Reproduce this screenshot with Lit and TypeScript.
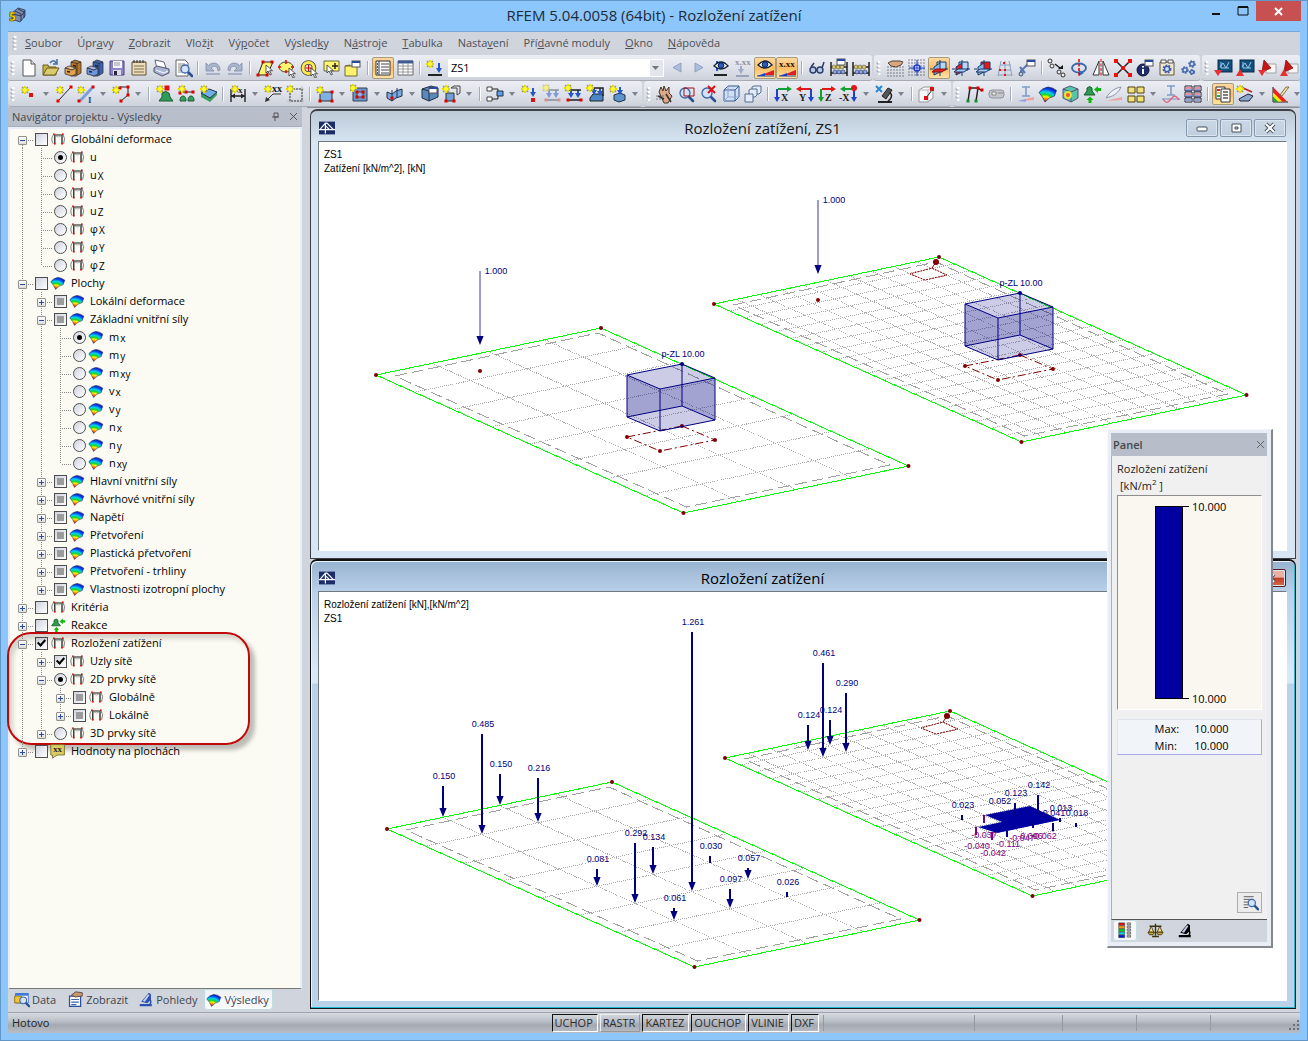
import { LitElement, html, svg, css, nothing } from "lit";
import { customElement, property, state } from "lit/decorators.js";
import { classMap } from "lit/directives/class-map.js";

/* ---------- icon building blocks (20 x 20 grid) ---------- */
const star = (x: number, y: number) => svg`
  <path d="M${x - 3} ${y - 3}l6 6M${x + 3} ${y - 3}l-6 6" stroke="#9a9a50" stroke-width="1.500"/>
  <path d="M${x} ${y - 4}v8M${x - 4} ${y}h8" stroke="#e8d800" stroke-width="2"/><circle cx=${x} cy=${y} r="2.200" fill="#fffb30"/>`;
const dot = (x: number, y: number, c = "#e00000", s = 3) =>
  svg`<rect x=${x - s / 2} y=${y - s / 2} width=${s} height=${s} fill=${c}/>`;
const dots = (pts: number[][], c = "#e00000", s = 3) => pts.map(([x, y]) => dot(x, y, c, s));
const line = (d: string, c = "#222", w = 1) => svg`<path d=${d} fill="none" stroke=${c} stroke-width=${w}/>`;
const cursor = (x: number, y: number) =>
  svg`<path d="M${x} ${y}v8l2-2 2 4 1.500-.7-2-3.600h3z" fill="#fff" stroke="#333" stroke-width=".8"/>`;
const lens = (x: number, y: number, r = 4) => svg`
  <path d="M${x + r - 1} ${y + r - 1}l4 4" stroke="#29508f" stroke-width="2.600" stroke-linecap="round"/>
  <circle cx=${x} cy=${y} r=${r} fill="#cfe2fb" fill-opacity=".85" stroke="#3c66a8" stroke-width="1.300"/>`;
const miniWin = (x: number, y: number) => svg`
  <rect x=${x} y=${y} width="8" height="6" fill="#fff" stroke="#555"/><path d="M${x} ${y + 1}h8" stroke="#2c4a9c" stroke-width="2"/>`;
const load = (x: number, y1: number, y2: number, c = "#2458c8") =>
  svg`<path d="M${x} ${y1}V${y2 - 3}" stroke=${c} stroke-width="2"/><path d="M${x - 3} ${y2 - 5}h6l-3 5z" fill=${c}/>`;
const wedge = svg`<path d="M10 15.500L19 12v5h-9z" fill="#e02020"/><path d="M2 18l8-3v3z" fill="#2040d0"/>${line("M2 18h17", "#2040a0")}`;
const glyph = (x: number, y: number, s: number, t: string, c = "#222") =>
  svg`<text x=${x} y=${y} font-size=${s} font-weight="700" font-family="Liberation Serif, serif" fill=${c}>${t}</text>`;
const gridDots = (x0: number, y0: number, nx: number, ny: number, c = "#222") => {
  const out = [];
  for (let i = 0; i < nx; i++) for (let j = 0; j < ny; j++) out.push(dot(x0 + i * 3, y0 + j * 3, c, 1));
  return out;
};
const gear = (x: number, y: number, r: number, c: string) => svg`
  <circle cx=${x} cy=${y} r=${r} fill="none" stroke=${c} stroke-width=${r} stroke-dasharray="1.500 1"/>
  <circle cx=${x} cy=${y} r=${r - 0.4} fill="#cfdcf2" stroke=${c} stroke-width="1.400"/>`;
const axes = (h: string, v: string, flip: boolean, t: string) => flip
  ? svg`${line("M4 5h12", h, 2)}<path d="M6 2v6l-5-3z" fill=${h}/>${line("M16 5v9", v, 2)}<path d="M13 13h6l-3 5z" fill=${v}/>${glyph(4, 17, 10, t)}`
  : svg`${line("M5 5h10", h, 2)}<path d="M14 2v6l5-3z" fill=${h}/>${line("M4 5v9", v, 2)}<path d="M1 13h6l-3 5z" fill=${v}/>${glyph(8, 17, 10, t)}`;
const planes = (n: number) => svg`
  <path d="M8 4h9v8H8z" fill=${n === 2 ? "#e81818" : "#b9d7f5"} stroke="#16396f"/>
  <path d="M5 9l6-4v9l-6 3z" fill=${n === 1 ? "#e02020" : "#8bb9e8"} stroke="#16396f"/>
  <path d="M3 14l4-3h10l-4 3z" fill=${n === 0 ? "#e02020" : "#a9cdf2"} stroke=${n === 0 ? "#901010" : "#16396f"}/>
  <path d="M11 2v3M11 14v4M1 11h3M16 11h3" stroke="#16396f"/>`;
const cabinet = (a: string, b: string, c: string) => svg`
  <path d="M8 4l4-2 6 2v11l-5 3H8z" fill=${b} stroke="#333" stroke-width=".8"/><path d="M8 4l6 1.500 4-1.500M14 5v12" stroke="#333" stroke-width=".8"/>
  <path d="M2 10l4-2 7 2-4 2z" fill=${c} stroke="#333" stroke-width=".8"/><path d="M2 10l7 2 4-2v6l-4 2-7-2z" fill=${a} stroke="#333" stroke-width=".8"/>
  <path d="M4 13.500l3 .6M10 7.500l3 .7" stroke="#222" stroke-width="1.500"/>`;
const rainbow = svg`
  <radialGradient id="bands" gradientUnits="userSpaceOnUse" cx="7" cy="20" r="17">
    <stop offset="0.150" stop-color="#e81000"/><stop offset="0.300" stop-color="#ff8000"/><stop offset="0.430" stop-color="#ffee00"/>
    <stop offset="0.560" stop-color="#18d828"/><stop offset="0.720" stop-color="#00d0f0"/><stop offset="0.860" stop-color="#0a50f0"/><stop offset="1" stop-color="#0818c0"/>
  </radialGradient>
  <path d="M1 8.500Q4 4 10 3q5 .5 8.500 3.500-1 2-2 5.500Q11 13 7 18 5 13 1 8.500z" fill="url(#bands)" stroke="#1c2a50" stroke-width=".7"/>`;
const abacus = svg`${line("M2 4v14M18 4v14M2 9h16M2 15h16", "#222", 1.5)}${[5, 9, 13].map(x => svg`<circle cx=${x} cy="9" r="2" fill="#d8c860" stroke="#555" stroke-width=".6"/><circle cx=${x + 1} cy="14" r="2" fill="#86a6e6" stroke="#335" stroke-width=".6"/>`)}`;
const eye = (y: number) => svg`<path d="M3 ${y}q7-8 14 0q-7 6-14 0z" fill="#fff" stroke="#123" stroke-width="1.300"/><circle cx="10" cy=${y - 0.5} r="2.800" fill="#2a5fc0" stroke="#001a50"/>`;
const arc = (flip: boolean) => svg`<g transform=${flip ? "translate(20 0) scale(-1 1)" : ""}>
  <path d="M3 13V5l2.500 2.500C10 3 17 5 17 12l-2 1c0-5-4-6-7-3l3 3z" fill="#a9b4cd" stroke="#7f8cab" stroke-width=".8"/><path d="M3 16h14" stroke="#9aa6bf" stroke-width="1.600"/></g>`;
const slab = svg`<path d="M2 5l9-3 7 2v9l-9 4-7-3z" fill="#5a88bd" stroke="#234"/><path d="M2 5l7 2 9-3M9 7v10" fill="none" stroke="#234"/>`;
const scene = svg`<rect x="5" y="2" width="14" height="12" fill="#12507c" stroke="#0a2c4a"/>${line("M7 9l3-4 3 5 3-6M8 4v6h8", "#9cc8ee")}`;
const leaf = svg`<path d="M9 6h10v9H9z" fill="#f6f6f6" stroke="#a4a4a4"/><path d="M7 2l7 8-9 4z" fill="#c81414" stroke="#801010" stroke-width=".8"/>`;

const icons: Record<string, unknown> = {
  new: svg`<path d="M4 2h8l4 4v12H4z" fill="#fff" stroke="#555"/><path d="M12 2v4h4" fill="#dde4f0" stroke="#555"/>`,
  open: svg`<path d="M2 7h5l1 2h7v8H2z" fill="#c9b44a" stroke="#6b5c16"/><path d="M2 17l4-7h12l-4 7z" fill="#dccb6c" stroke="#6b5c16"/><path d="M9 5c2-3 5-3 6 0M16 1v5h-4" fill="none" stroke="#3c6ea8" stroke-width="1.500"/>`,
  boxOrange: cabinet("#e3a24e", "#b87526", "#f0c489"),
  boxBlue: cabinet("#6f95e0", "#3c62b8", "#a9c2f2"),
  save: svg`<path d="M3 3h14v14H3z" fill="#8d85c4" stroke="#4a437e"/><path d="M6 3h9v7H6z" fill="#f4f4fb"/><path d="M7 5h6M7 7h6" stroke="#99a"/><path d="M6 12h8v5H6z" fill="#dcdcec"/><path d="M7 13h3v4H7z" fill="#26263c"/>`,
  note: svg`<path d="M3 4h14v13H3z" fill="#efdcb8" stroke="#5e5138"/><path d="M3 4h14M5 8h10M5 11h10M5 14h10" stroke="#7b6c4e"/><path d="M5 2v3M8 2v3M11 2v3M14 2v3" stroke="#333"/>`,
  print: svg`<path d="M4 2l9 2 2 6-9 1z" fill="#fff" stroke="#667"/><path d="M3 10l3-2 12 3v4l-7 3-8-4z" fill="#aab4d6" stroke="#556"/><path d="M5 12l8 3 4-2" stroke="#fff" fill="none"/>`,
  preview: svg`<path d="M3 2h9l3 3v13H3z" fill="#fff" stroke="#666"/>${line("M5 6h7M5 8h7M5 10h5M5 12h5M5 14h5", "#888")}${lens(12, 11, 4)}`,
  undo: arc(false), redo: arc(true),
  selPara: svg`<path d="M3 17L8 4h10l-6 13z" fill="#fff46e" stroke="#222"/>${dots([[3, 17], [8, 4], [17, 4], [12, 17]])}${cursor(11, 7)}`,
  selEll: svg`<ellipse cx="9" cy="9" rx="7" ry="5" fill="#fff46e" stroke="#444"/>${line("M9 2v4M9 12v3M1 9h3M14 9h3", "#e00000", 1.5)}${cursor(12, 10)}`,
  selRing: svg`<circle cx="9.500" cy="10" r="5.500" fill="none" stroke="#444" stroke-width="4.600"/><circle cx="9.500" cy="10" r="5.500" fill="none" stroke="#ffe94a" stroke-width="3"/>${line("M9.500 7v6M6.500 10h6", "#e00000")}${cursor(12, 10)}`,
  selPlus: svg`<path d="M3 3h15v10H3z" fill="#fff46e" stroke="#6a6a40"/>${line("M11 8h6M14 5v6", "#222", 1.500)}${cursor(6, 7)}`,
  selWin: svg`<path d="M2 8h12v10H2z" fill="#fff26a" stroke="#6a6a40"/><path d="M2 8l5-1v1" stroke="#6a6a40"/>${miniWin(9, 3)}`,
  navigator: svg`<path d="M3 3h14v14H3z" fill="#fff" stroke="#333"/><path d="M6 3v14" stroke="#333"/>${line("M8 6h8M8 9h8M8 12h8M8 15h8", "#445")}${line("M4 6h1M4 9h1M4 12h1M4 15h1", "#222", 1.5)}`,
  table: svg`<path d="M3 3h15v14H3z" fill="#fff" stroke="#666"/><path d="M3 4h15" stroke="#3e5c92" stroke-width="3"/>${line("M3 8h15M3 11h15M3 14h15M8 5v12M13 5v12", "#999")}`,
  newLoad: svg`${star(5, 6)}${load(14, 5, 15)}${line("M3 17h14", "#222", 2)}`,
  prev: svg`<path d="M14 5v9l-8-4.500z" fill="#aebede" stroke="#8796bb" stroke-width=".8"/>`,
  next: svg`<path d="M6 5v9l8-4.500z" fill="#aebede" stroke="#8796bb" stroke-width=".8"/>`,
  eyeLoad: svg`${line("M6 3v10", "#2458c8", 2)}${eye(8)}${line("M3 17h13", "#222", 2)}`,
  valLoad: svg`${glyph(2, 7, 9, "x.xx", "#8f94a6")}${load(8, 8, 16, "#a0aac4")}${line("M3 18h13", "#9aa2b8", 2)}`,
  eyeRes: svg`${wedge}${eye(7)}`,
  valRes: svg`${wedge}${glyph(2, 9, 9, "x.xx", "#201400")}`,
  glasses: svg`<g fill="#b7c8ea" stroke="#2b3c66" stroke-width="1.400"><circle cx="6" cy="12" r="3"/><circle cx="13" cy="12" r="3"/></g>${line("M4 9l3-4M15 10l2-6M9 12h1", "#2b3c66", 1.500)}`,
  abacusWin: svg`${abacus}${miniWin(8, 1)}`, abacus,
  gridHand: svg`${gridDots(3, 9, 6, 4)}<path d="M3 5l4-2h8l3 1-2 3-5 2-5-1z" fill="#d9a67e" stroke="#543"/>`,
  gridSnap: svg`${gridDots(2, 2, 6, 6)}<circle cx="10" cy="10" r="3" fill="#fff" stroke="#1838c8" stroke-width="1.500"/>${line("M10 2v16M2 10h16", "#1838c8")}`,
  plane0: planes(0), plane1: planes(1), plane2: planes(2),
  guides: svg`${line("M6 3L3 18M10 3v15M14 3l3 15M5 7h11M4 12h12M3 17h14", "#8aa0c0")}${dots([[9, 5], [5, 12], [10, 12], [10, 17]], "#e01818", 2)}`,
  props: svg`${line("M4 17L4 13 12 5M3 9l5 6", "#5a78b0", 2)}<circle cx="4" cy="16" r="2" fill="#b8c8e8" stroke="#456"/>${miniWin(10, 2)}`,
  copy: svg`${line("M8 6l5 4", "#111", 1.300)}<path d="M11 11h5V7z" fill="#111"/><g fill="#eee" stroke="#333"><circle cx="3" cy="3" r="2"/><circle cx="5" cy="8" r="2"/><circle cx="12" cy="14" r="2"/><circle cx="16" cy="17" r="2"/></g>`,
  rotate: svg`<ellipse cx="10" cy="10" rx="7" ry="4.500" fill="none" stroke="#3468b0" stroke-width="1.800"/><path d="M10 12l5 3-5 3z" fill="#3468b0"/><path d="M10 1v18" stroke="#e00000" stroke-width="1.500" stroke-dasharray="3 1.500"/>`,
  mirror: svg`<path d="M8 3v14H2zM12 3v14h6z" fill="#fff" stroke="#333"/><path d="M10 1v18" stroke="#e00000" stroke-dasharray="3 1.500"/>`,
  cross: svg`${line("M3 3l14 14M17 3L3 17", "#222", 1.500)}${dots([[3, 3], [17, 3], [3, 17], [17, 17], [10, 10]], "#e81010", 4)}`,
  info: svg`<circle cx="8" cy="12" r="6" fill="#1e2c6c" stroke="#0a1238"/><path d="M8 8v1.500M8 11v5" stroke="#fff" stroke-width="2"/>${miniWin(10, 2)}`,
  gearWin: svg`<path d="M3 4h14v13H3z" fill="#f3e7cd" stroke="#5b5443"/><path d="M4 2h5v3H4zM11 2h5v3h-5z" fill="#fff" stroke="#555"/>${gear(10, 11, 3, "#3b5fa8")}`,
  gears: svg`${gear(6, 12, 2.5, "#4467a8")}${gear(13, 6, 2.5, "#4467a8")}${gear(13, 14, 2, "#4467a8")}`,
  sceneDown: svg`${scene}<path d="M1 12h8l-4 6z" fill="#e83030"/>`,
  sceneUp: svg`${scene}<path d="M1 18h8l-4-7z" fill="#e83030"/>`,
  leafDown: svg`${leaf}<path d="M1 12h8l-4 6z" fill="#e83030"/>`,
  leafUp: svg`${leaf}<path d="M1 18h8l-4-7z" fill="#e83030"/>`,

  node: svg`${star(6, 6)}${dot(12, 11, "#e01010", 4)}`,
  bar: svg`${line("M5 16L16 4", "#222")}${dots([[4, 17], [17, 3]])}${star(6, 6)}`,
  beam: svg`${line("M4 17L16 4", "#7da0d8", 3)}${star(5, 6)}${dots([[3, 17], [17, 3]])}${glyph(12, 19, 9, "I", "#23468c")}`,
  poly: svg`${line("M4 6h3l2-3h8v8l-7 6", "#222")}${dots([[9, 4], [17, 3], [17, 11], [10, 17], [4, 6]])}${star(5, 6)}`,
  support: svg`<path d="M8 9q4-3 7 0l1 4 3 4H5l3-4z" fill="#2f9c58" stroke="#1c5c30"/>${dot(13, 4, "#e01010", 5)}${star(6, 5)}`,
  lineSup: svg`${line("M4 8h13", "#222")}${dots([[4, 9], [17, 8], [10, 8]])}<path d="M4 17q0-5 3-5t3 5zM12 17q0-5 3-5t3 5z" fill="#38a05c" stroke="#1c5c30"/>${star(6, 5)}`,
  surfSup: svg`<path d="M3 13l9 5 7-7v-3l-7 5-9-4z" fill="#38a05c"/><path d="M3 9l8-4 8 3-7 6z" fill="#6fb0ea" stroke="#234"/>${star(6, 5)}`,
  dim: svg`${line("M3 5v13M17 5v13M3 12h14", "#222", 1.400)}<path d="M3 12l4-2.500v5zM17 12l-4-2.500v5z" fill="#222"/>${star(7, 5)}${glyph(10, 9, 9, "x")}`,
  note2: svg`${star(5, 5)}${glyph(9, 8, 10, "xx")}${line("M18 10H10l-7 7", "#333")}<path d="M2 18l1-5 4 3z" fill="#333"/>`,
  frameGrid: svg`<path d="M5 5h12v12H5z" fill="none" stroke="#222" stroke-dasharray="2 1"/>${line("M5 2v17M17 2v17M2 5h17M2 17h17", "#999", 0.5)}${star(5, 5)}`,
  surface: svg`<path d="M5 8h12v9H5z" fill="#7fb2e4" stroke="#333"/>${dots([[5, 17], [17, 17], [17, 8]])}${star(5, 6)}`,
  opening: svg`<path d="M3 4h14v13H3z" fill="#6a97cc" stroke="#345"/><path d="M7 8h6v5H7z" fill="#8fb4e0" stroke="#345"/>${dots([[7, 8], [13, 8], [7, 13], [13, 13]])}${star(3, 4)}`,
  fold: svg`<path d="M2 8l5 2 4-3 6-2v7l-6 2-4 3-5-3z" fill="#79a9dc" stroke="#234"/>${line("M7 6v11M12 4v10", "#1c3566")}${dot(7, 14)}`,
  solid: svg`${slab}${miniWin(9, 3)}`,
  solids: svg`<path d="M4 9h8v8H4z" fill="#6f9fd4" stroke="#333"/><path d="M9 4l3-2h6v7l-3 2" fill="none" stroke="#444"/><path d="M9 4h6v7" fill="none" stroke="#444"/>${dots([[4, 17], [12, 17]])}${star(4, 5)}`,
  release: svg`<path d="M2 3h5v4H2zM2 13h5v4H2z" fill="#fff" stroke="#444"/>${line("M7 5h6v3M7 15h6v-3", "#222")}<path d="M12 7h6v5h-6z" fill="#5f9ee6" stroke="#234"/>`,
  nodalLoad: svg`${star(5, 5)}${load(13, 4, 13)}${dot(13, 16, "#e01010", 4)}`,
  barLoad: svg`<g opacity=".5">${load(7, 6, 14)}${load(14, 6, 14)}${line("M4 6h13M4 16h13", "#345", 1.500)}${star(4, 4)}</g>${dots([[4, 16], [17, 16]], "#d89090")}`,
  lineLoad: svg`${load(7, 6, 14)}${load(14, 6, 14)}${line("M4 6h13M4 16h13", "#222", 1.500)}${star(4, 4)}${dots([[4, 16], [17, 16]])}`,
  surfLoad: svg`<path d="M4 14l3-4h10v7H4z" fill="#4a86c8" stroke="#222"/>${load(8, 4, 11)}${load(14, 4, 12)}${line("M5 4h12v8", "#222", 1.500)}${star(4, 4)}`,
  solidLoad: svg`<path d="M6 11l6-2 5 2v5l-6 2-5-2z" fill="#5e94cc" stroke="#234"/>${load(12, 3, 11)}${star(5, 5)}`,
  hand: svg`<path d="M4 8l2-5 2 4 1-5 2 5 3-4v6l3 3-4 7H9z" fill="#dba98a" stroke="#432"/><path d="M11 10l5 8M3 12l6 3" stroke="#333" stroke-width="1.600"/>${gridDots(2, 12, 3, 2)}`,
  zoomWin: svg`${lens(8, 9, 5)}<path d="M7 4h10v8H7z" fill="none" stroke="#a01010"/>`,
  zoomX: svg`${lens(8, 9, 5)}${line("M9 2l7 7M16 2L9 9", "#e01010", 2)}`,
  cube: svg`<path d="M3 6l4-4h11v11l-4 4H3z" fill="#cfdff4" stroke="#3b5d94"/><path d="M3 6h11v11M14 6l4-4" fill="none" stroke="#3b5d94"/><path d="M7 2v11h11M7 13l-4 4" fill="none" stroke="#8fa8cf"/>`,
  cubes: svg`<g fill="#e4ecf8" stroke="#556a90"><path d="M9 3l2-1h7v6l-2 2H9z"/><path d="M6 6l2-1h6v6l-2 2H6z"/><path d="M2 10h8v8H2z"/></g>`,
  axX: axes("#12a030", "#2040d0", false, "X"), axY: axes("#e01818", "#2040d0", true, "Y"),
  axZ: axes("#e01818", "#12a030", false, "Z"),
  axMX: svg`${line("M3 5h12", "#12a030", 2)}<path d="M6 2v6L1 5z" fill="#12a030"/>${line("M15 5v9", "#2040d0", 2)}<path d="M12 13h6l-3 5z" fill="#2040d0"/><circle cx="15" cy="4" r="3" fill="#e01818"/>${glyph(0, 17, 10, "-X")}`,
  microX: svg`<path d="M4 17h14v2H4z" fill="#222"/><path d="M8 12l6-8 4 2-6 9z" fill="#555" stroke="#222"/><path d="M16 8c3 4 1 7-2 9" fill="none" stroke="#222" stroke-width="1.500"/>${line("M2 2l6 6M8 2L2 8", "#2a86d8", 2)}`,
  clip: svg`<path d="M2 6l5-3h9v11l-5 4H2z" fill="#f4f6fa" stroke="#999"/>${line("M2 6h9v12M11 6l5-3", "#b8b8b8")}${line("M9 14l6-8", "#222")}${dots([[9, 14], [15, 5]], "#d81010", 4)}`,
  frame: svg`${line("M4 17L6 4h8l4 3M14 4l-2 13", "#222", 1.500)}${dots([[6, 4], [14, 4], [18, 6]])}${dots([[4, 17], [12, 17]], "#109030")}`,
  pill: svg`<rect x="3" y="6" width="15" height="8" rx="3" fill="#c3c6cf" stroke="#90949f"/><path d="M6 8h4v3H6z" fill="#eee" stroke="#888"/><path d="M12 9h5" stroke="#888"/>`,
  beamRes: svg`${line("M6 3h8M10 3v9M6 12h8", "#7f9cc8", 1.600)}<path d="M2 17L18 13v3z" fill="#f0a0a0"/><path d="M2 17l8-2v3z" fill="#8fa4e8"/>`,
  surfRes: rainbow,
  solidRes: svg`<path d="M3 5l7-3 8 3v9l-7 4-8-4z" fill="#58c4a8" stroke="#557"/><path d="M3 5l8 3v10M11 8l7-3" fill="none" stroke="#557"/><ellipse cx="8" cy="11" rx="4" ry="4" fill="#e8e040"/><circle cx="8" cy="11" r="2" fill="#f05a20"/>`,
  reactions: svg`<path d="M5 4q3-3 5 0v3l3 4H2l3-4z" fill="#2f9a50" stroke="#175c2c"/><path d="M6.500 19h3v-3h2L8 12.500 4.500 16h2z" fill="#0cb80c"/><path d="M19 4h-3V2l-4 3.500L16 9V7h3z" fill="#0cb80c"/>`,
  section: svg`<path d="M2 14c5-8 10-10 15-11-2 5-7 9-12 10z" fill="#eef2f8" stroke="#8a94a8"/><path d="M2 17L18 13v3z" fill="#f0a0a0"/>`,
  folders: svg`<g fill="#f2e27c" stroke="#4c4010"><path d="M2 3h7v6H2zM11 3h7v6h-7zM2 12h7v6H2zM11 12h7v6h-7z"/></g>`,
  diagram: svg`${line("M6 2h8M10 2v9M6 11h8", "#7f9cc8", 1.600)}${line("M1 15h18", "#8090c0")}${line("M2 15c3 5 5 4 8 0s5-4 8 1", "#e06080", 1.300)}`,
  tables: svg`<g fill="#fff" stroke="#223"><path d="M2 2h7v5H2zM11 2h7v5h-7zM2 8h7v5H2zM11 8h7v5h-7zM2 14h7v4H2zM11 14h7v4h-7z"/></g>${line("M3 4h5M12 4h5M3 10h5M12 10h5", "#d02040")}${line("M3 6h5M12 6h5M3 12h5M12 12h5M3 16h5M12 16h5", "#2040c0")}`,
  panel: svg`<path d="M3 3h9v12H3z" fill="#fff" stroke="#333"/><path d="M8 5h9v13H8z" fill="#fff" stroke="#333"/>${line("M10 8h5M10 11h5M10 14h5", "#555", 1.500)}<path d="M4 5h3v2H4z" fill="#e02020"/><path d="M4 8h3v2H4z" fill="#f0d020"/><path d="M4 11h3v2H4z" fill="#20b040"/>`,
  newView: svg`<path d="M4 15l9-5 5 2-4 5H5z" fill="#8ca8cc" stroke="#223"/>${line("M8 4l9 4", "#c02020", 1.500)}${star(5, 5)}`,
  render: svg`<path d="M3 3v15h15" stroke="#222"/><path d="M3 3l14 14.500h-5L3 8.500z" fill="#f02020"/><path d="M3 8.500l9 9H8l-5-5z" fill="#ffe600"/><path d="M3 12.500l5 5H3z" fill="#10b020"/><path d="M19 3l-7 9-2-1 6-8z" fill="#f4e4a0" stroke="#653" stroke-width=".8"/>`,

  frameTree: svg`${line("M6 16V5h9v11", "#111", 1.500)}${line("M4 16Q0 9 5 4M17 16q3-7-1-12", "#777", 1.200)}${line("M6 6q4.500 3 9 0", "#999")}${dots([[5, 4], [16, 4], [6, 16], [15, 16]], "#e01010", 2)}`,
  xx: svg`<path d="M1 2h17v13H9l-6 4v-4H1z" fill="#d8cc62" stroke="#6b6220"/>${glyph(4, 11, 11, "xx")}`,
  tabData: svg`<path d="M3 3h15v11H3z" fill="#fff" stroke="#36c"/><path d="M2 6h8v8H2z" fill="#f4c534" stroke="#8a6a10"/><path d="M3 4h15" stroke="#3c78d8" stroke-width="3"/>${lens(12, 11, 4)}`,
  tabShow: svg`<path d="M3 6h13v12H3z" fill="#fff" stroke="#2c50a0" stroke-width="1.500"/>${line("M5 10h9M5 13h9M5 16h6", "#3c68b8", 1.400)}<path d="M5 5l5-4 8 1v4l-8 1z" fill="#c99672" stroke="#543"/>`,
  micro: svg`<path d="M1 16h16v3H1z" fill="currentColor"/><path d="M3 13L13 1l3 2v7l-5 5z" fill="currentColor"/><path d="M5 12l7-9 2 1-6 9z" fill="#c4cfe8"/><path d="M14 9c3 4 2 6 0 8" stroke="currentColor" stroke-width="2"/>`,
  legend: svg`${["#e81010", "#ffa000", "#00d820", "#00d8f0", "#0010e8"].map((c, i) => svg`<path d="M2 ${1 + i * 3.6}h7v3H2z" fill=${c} stroke="#333" stroke-width=".6"/><path d="M12 ${1 + i * 3.6}h4v2.400h-4z" fill="#bbb" stroke="#555" stroke-width=".8"/>`)}`,
  scales: svg`${line("M10 2v14M3 5h14M6 17h8", "#3d3210", 1.600)}<path d="M2 12l3-7 3 7zM12 12l3-7 3 7z" fill="#f4e080" stroke="#3d3210"/><path d="M1 12h8l-2 3H3zM11 12h8l-2 3h-4z" fill="#c8a830" stroke="#3d3210"/>`,
  find: svg`${line("M3 3h11M3 6h11M3 9h6M3 12h5M3 15h5", "#555")}${lens(12, 10, 4)}`,
  bridge: svg`<path d="M0 2h20v16H0z" fill="#1c2c68"/>${line("M0 12h20M8 3v14M8 4L1 12M8 4h2l8 8M9 8l4 4", "#fff", 1.500)}`,
};

const icon = (name: string, size = 20) =>
  html`<svg width=${size} height=${size} viewBox="0 0 20 20" fill="none" aria-hidden="true">${icons[name]}</svg>`;

/* "|" is a divider, a leading "*" marks a pressed button, a trailing ":v" adds the menu arrow */
const bars: string[][][] = [
  [
    "new open boxOrange boxBlue save note print preview | undo redo | selPara selEll selRing selPlus selWin | *navigator table | newLoad combo prev next eyeLoad valLoad *eyeRes *valRes | glasses abacusWin abacus",
    "gridHand gridSnap *plane0 plane1 plane2 guides props | copy rotate mirror cross info gearWin gears",
    "sceneDown sceneUp leafDown leafUp",
  ].map(s => s.split(" ")),
  [
    "node:v bar beam:v poly:v | support lineSup surfSup | dim:v note2 frameGrid | surface:v opening:v fold:v solid solids:v | release:v nodalLoad barLoad lineLoad surfLoad solidLoad:v",
    "hand zoomWin zoomX cube cubes | axX axY axZ axMX:v microX:v | clip:v",
    "frame pill | beamRes surfRes solidRes reactions section folders:v diagram tables | *panel newView:v render:v",
  ].map(s => s.split(" ")),
];

const menus = ["_Soubor", "Úpr_avy", "_Zobrazit", "Vlož_it", "Vý_počet", "Výsled_ky", "N_ástroje", "_Tabulka", "Nasta_vení", "Pří_davné moduly", "_Okno", "_Nápověda"];

/* ---------- navigator tree ---------- */
interface TreeNode {
  t: string; sub?: string; icon?: string;
  kind?: "check" | "radio"; on?: boolean; mixed?: boolean;
  open?: boolean; kids?: TreeNode[]; leaf?: boolean; group?: string; marked?: boolean;
}
const radios = (group: string, ic: string, list: string[][]): TreeNode[] =>
  list.map(([t, sub], i) => ({ t, sub, icon: ic, kind: "radio", on: i === 0, leaf: true, group }));
const mixed = (t: string, ic = "surfRes"): TreeNode => ({ t, icon: ic, mixed: true });

const tree: TreeNode[] = [
  { t: "Globální deformace", icon: "frameTree", open: true, kids: radios("def", "frameTree", [["u"], ["u", "X"], ["u", "Y"], ["u", "Z"], ["φ", "X"], ["φ", "Y"], ["φ", "Z"]]) },
  {
    t: "Plochy", icon: "surfRes", open: true, kids: [
      mixed("Lokální deformace"),
      { ...mixed("Základní vnitřní síly"), open: true, kids: radios("force", "surfRes", [["m", "x"], ["m", "y"], ["m", "xy"], ["v", "x"], ["v", "y"], ["n", "x"], ["n", "y"], ["n", "xy"]]) },
      mixed("Hlavní vnitřní síly"), mixed("Návrhové vnitřní síly"), mixed("Napětí"), mixed("Přetvoření"),
      mixed("Plastická přetvoření"), mixed("Přetvoření - trhliny"), mixed("Vlastnosti izotropní plochy"),
    ],
  },
  { t: "Kritéria", icon: "frameTree" },
  { t: "Reakce", icon: "reactions" },
  {
    t: "Rozložení zatížení", icon: "frameTree", on: true, open: true, marked: true, kids: [
      { t: "Uzly sítě", icon: "frameTree", on: true },
      { t: "2D prvky sítě", icon: "frameTree", kind: "radio", group: "mesh", on: true, open: true, kids: [mixed("Globálně", "frameTree"), mixed("Lokálně", "frameTree")] },
      { t: "3D prvky sítě", icon: "frameTree", kind: "radio", group: "mesh" },
    ],
  },
  { t: "Hodnoty na plochách", icon: "xx" },
];

@customElement("nav-tree")
class NavTree extends LitElement {
  @state() private version = 0;

  static styles = css`
    :host { display: block; }
    .group { position: relative; }
    .row { display: flex; align-items: center; height: 18px; }
    .guide, .cell { flex: none; align-self: stretch; position: relative; width: 19px; }
    .cell { width: 22px; }
    .v::before, .h::after { content: ""; position: absolute; }
    .v::before { left: 9px; top: 0; bottom: 0; width: 1px; background: repeating-linear-gradient(#8a8a8a 0 1px, transparent 1px 2px); }
    .first::before { top: 9px; }
    .last::before { bottom: 8px; }
    .h::after { left: 11px; right: 2px; top: 10px; height: 1px; background: repeating-linear-gradient(90deg, #8a8a8a 0 1px, transparent 1px 2px); }
    .twist { position: absolute; z-index: 1; left: 5px; top: 6px; width: 9px; height: 9px; padding: 0; border: 1px solid #919191; border-radius: 1px; background: linear-gradient(#fff, #dcdcdc); }
    .twist::before, .twist.plus::after { content: ""; position: absolute; left: 1px; top: 3px; width: 5px; height: 1px; background: #2a4d9a; }
    .twist.plus::after { left: 3px; top: 1px; width: 1px; height: 5px; }
    label { display: flex; align-items: center; white-space: nowrap; }
    input { appearance: none; flex: none; width: 13px; height: 13px; margin: 0 2px 0 0; border: 1px solid #4e4e4e; background: linear-gradient(135deg, #cfd3dd, #fff); position: relative; }
    input[type="radio"] { border-radius: 7px; }
    input[type="radio"]:checked::after { content: ""; position: absolute; left: 3px; top: 3px; width: 5px; height: 5px; border-radius: 3px; background: #000; }
    input[type="checkbox"]:checked::after { content: ""; position: absolute; left: 3px; top: 0; width: 3px; height: 6px; border: solid #000; border-width: 0 2px 2px 0; transform: rotate(42deg); }
    input:indeterminate[type="checkbox"]::after { content: ""; position: absolute; left: 2px; top: 2px; width: 7px; height: 7px; background: #9c9c9c; }
    svg { flex: none; margin-right: 5px; }
    sub { font-size: 10px; line-height: 8px; vertical-align: -1px; margin-left: 1px; }
    .mark { position: absolute; left: -6px; top: -2px; bottom: -3px; width: 239px; border: 2px solid #c00808; border-radius: 24px; box-shadow: 5px 5px 4px rgba(0, 0, 0, 0.25), inset 4px 5px 4px rgba(0, 0, 0, 0.15); pointer-events: none; }
  `;

  private toggle(n: TreeNode) {
    if (n.kids) { n.open = !n.open; this.version++; }
  }

  private nodes(list: TreeNode[], guides: boolean[]): unknown {
    return list.map((n, i) => {
      const last = i === list.length - 1;
      const first = i === 0 && guides.length === 0;
      return html`<div class="group">
        <div class="row">
          ${guides.map(g => html`<span class="guide ${g ? "v" : ""}"></span>`)}
          <span class=${classMap({ cell: true, v: true, h: true, first, last })}>
            ${n.leaf ? nothing : html`<button class="twist ${n.open ? "" : "plus"}" aria-label=${n.t} @click=${() => this.toggle(n)}></button>`}
          </span>
          <label>
            <input type=${n.kind === "radio" ? "radio" : "checkbox"} name=${n.group ?? n.t} .checked=${!!n.on} .indeterminate=${!!n.mixed}>
            ${icon(n.icon!, 16)}<span>${n.t}${n.sub ? html`<sub>${n.sub}</sub>` : nothing}</span>
          </label>
        </div>
        ${n.kids && n.open ? this.nodes(n.kids, [...guides, !last]) : nothing}
        ${n.marked ? html`<div class="mark"></div>` : nothing}
      </div>`;
    });
  }

  render() { return this.nodes(tree, []); }
}

/* ---------- model views ---------- */
type Pt = [number, number];
const pts = (l: Pt[]) => l.map(p => p.join(",")).join(" ");
const shift = (l: Pt[], dx: number, dy: number): Pt[] => l.map(([x, y]) => [x + dx, y + dy]);
const NAVY = "#000080";

const slabPlan = (x: number, y: number, nu: number, nv: number) => {
  const at = (u: number, v: number): Pt => [x + 225 * u + 307.5 * v, y - 47 * u + 138 * v];
  const corners: Pt[] = [at(0, 0), at(1, 0), at(1, 1), at(0, 1)];
  const off: Pt[] = [[19, 1], [-3, 5], [-19, -1], [3, -6]];
  const inner = corners.map(([a, b], i): Pt => [a + off[i][0], b + off[i][1]]);
  const seg = (a: Pt, b: Pt) => `M${a}L${b}`;
  let grid = "";
  for (let i = 1; i < nu; i++) grid += seg(at(i / nu, 0), at(i / nu, 1));
  for (let j = 1; j < nv; j++) grid += seg(at(0, j / nv), at(1, j / nv));
  return svg`
    <path d=${grid} class="grid"/>
    <polygon points=${pts(inner)} class="inner"/>
    <polygon points=${pts(corners)} class="edge"/>
    ${corners.map(([a, b]) => svg`<circle cx=${a} cy=${b} r="2" fill="#800000"/>`)}`;
};

const arrow = (x: number, top: number, tip: number, w = 2, head = 10) => svg`
  <path d="M${x} ${top}V${head ? tip - head + 1 : tip}" stroke=${w > 1 ? NAVY : "#3838a0"} stroke-width=${w}/>
  ${head ? svg`<path d="M${x - head * 0.4} ${tip - head}h${head * 0.8}L${x} ${tip}z" fill=${NAVY}/>` : nothing}`;

const marker = (x: number, y: number) => svg`
  <path d="M${x} ${y}l-4 6" stroke="#800000"/><circle cx=${x} cy=${y} r="3" fill="#800000"/>
  <path d="M${x - 4} ${y + 6}l15 7-22 5-15-6z" fill="none" stroke="#900000" stroke-dasharray="2 1"/>`;

const areaLoad = (dx: number, dy: number) => {
  const top = shift([[363, 222], [308, 233], [341, 247], [396, 236]], dx, dy);
  const low = shift(top, 0, 42);
  const foot = shift(top, 0, 62);
  return svg`
    <polygon points=${pts(foot)} fill="none" stroke="#800000" stroke-dasharray="8 3 2 3"/>
    ${foot.map(([a, b]) => svg`<circle cx=${a} cy=${b} r="2" fill="#800000"/>`)}
    <g fill=${NAVY} fill-opacity=".2">
      <polygon points=${pts([top[1], top[0], top[3], low[3], low[2], low[1]])}/>
      <polygon points=${pts([top[1], top[2], top[3], low[3], low[0], low[1]])}/>
    </g>
    <g fill="none" stroke=${NAVY}><polygon points=${pts(top)}/><polygon points=${pts(low)}/>
      ${top.map((t, i) => svg`<path d="M${t}L${low[i]}"/>`)}</g>
    <circle cx=${top[0][0]} cy=${top[0][1]} r="2" fill=${NAVY}/>
    <text x=${top[0][0] + 1} y=${top[0][1] - 7} class="val">p-ZL 10.00</text>`;
};

const pointLoad = (x: number, y: number) => svg`
  ${arrow(x, y, y + 74, 1, 9)}<circle cx=${x} cy=${y + 100} r="2" fill="#800000"/>
  <text x=${x + 16} y=${y + 3} class="val">1.000</text>`;

/* x, top, tip, value, arrow head */
const meshLoads: [number, number, number, string, boolean][] = [
  [124, 194, 225, "0.150", true], [163, 142, 242, "0.485", true], [181, 182, 213, "0.150", true], [219, 186, 230, "0.216", true],
  [278, 277, 294, "0.081", true], [316, 251, 311, "0.292", true], [334, 255, 282, "0.134", true], [373, 40, 299, "1.261", true],
  [355, 316, 328, "0.061", true], [411, 297, 316, "0.097", true], [391, 264, 271, "0.030", false], [429, 276, 287, "0.057", true],
  [468, 300, 305, "0.026", false], [489, 133, 158, "0.124", true], [504, 71, 165, "0.461", true], [511, 128, 153, "0.124", true],
  [527, 101, 160, "0.290", true], [643, 223, 228, "0.023", false], [696, 211, 224, "0.123", false], [719, 203, 222, "0.142", false],
  [741, 226, 230, "0.013", false], [757, 231, 235, "0.018", false],
];
const loose: [number, number, string][] = [[681, 212, "0.052"], [735, 224, "0.041"]];
const negative: [number, number, string][] = [
  [665, 246, "-0.037"], [658, 257, "-0.040"], [674, 264, "-0.042"], [689, 255, "-0.111"], [703, 249, "-0.047"], [711, 247, "-0.096"], [725, 247, "-0.062"],
];

const viewLoads = () => svg`
  ${slabPlan(57, 233, 4, 8)}${slabPlan(395, 162, 10, 20)}${marker(617, 120)}
  ${pointLoad(161, 129)}${pointLoad(499, 58)}${areaLoad(0, 0)}${areaLoad(338, -71)}`;

const viewMesh = () => svg`
  ${slabPlan(68, 237, 4, 8)}${slabPlan(406, 166, 10, 20)}${marker(628, 124)}
  <polygon points="666,223 711,214 741,228 678,241 659,235 683,230" fill="#0000a0"/>
  <path d="M665 223v8M657 235v8M673 240v8" stroke="#800080" stroke-width="2"/>
  <path d="M714 230v6M688 239v6M734 231v8" stroke=${NAVY} stroke-width="2"/>
  ${meshLoads.map(([x, a, b, , h]) => arrow(x, a, b, 2, h ? 9 : 0))}
  ${meshLoads.map(([x, a, , t]) => svg`<text x=${x + 1} y=${a - 7} class="val">${t}</text>`)}
  ${loose.map(([x, y, t]) => svg`<text x=${x} y=${y} class="val">${t}</text>`)}
  ${negative.map(([x, y, t]) => svg`<text x=${x} y=${y} class="val neg">${t}</text>`)}`;

@customElement("model-window")
class ModelWindow extends LitElement {
  @property() heading = "";
  @property({ type: Boolean, reflect: true }) active = false;
  @property({ attribute: false }) captions: string[] = [];
  @property({ attribute: false }) drawing: unknown = nothing;

  static styles = css`
    :host { display: flex; flex: 1 1 0; flex-direction: column; min-height: 200px; box-sizing: border-box; border: 1px solid #3c3f45; border-top-width: 2px; border-radius: 7px 7px 0 0; padding: 0 8px 7px 7px; background: linear-gradient(#bccad8, #d8e5f2 32px, #d8e5f2); }
    :host([active]) { border-color: #111; border-bottom-color: #16181c; background: linear-gradient(#98b3d0, #bad1ea 32px, #d9e8f7 110px, #d9e8f7 122px, #bad1ea 123px); box-shadow: inset -1px -1px #19bcd0, inset 1px 1px #e8f3fc; }
    header { display: grid; grid-template-columns: 22px 1fr 102px; align-items: center; height: 30px; padding: 3px 1px 0 1px; box-sizing: border-box; }
    h2 { margin: 0; font: 15px/20px "Open Sans", sans-serif; color: #151515; text-align: center; white-space: nowrap; }
    :host([active]) h2 { color: #000; }
    .mark { display: flex; }
    .keys { display: flex; justify-content: flex-end; gap: 2px; }
    .keys button { width: 32px; height: 18px; padding: 0; display: grid; place-items: center; border: 1px solid #8697ae; border-radius: 2px; background: linear-gradient(#c9d7e6, #c0cfdf); box-shadow: inset 0 0 0 1px #dbe6f1; }
    :host([active]) .close { border-color: #5a1a14; background: linear-gradient(#eeb0a4 45%, #c03c24 50%, #d86a50); }
    .view { flex: 1; position: relative; overflow: hidden; border: 1px solid #707880; border-right-color: #fff; border-bottom-color: #fff; background: #fff; }
    .view svg { position: absolute; inset: 0; width: 100%; height: 100%; }
    .notes { position: relative; z-index: 1; padding: 6px 5px; font: 10px/14px "Liberation Sans", sans-serif; color: #000; }
    .grid { fill: none; stroke: #acacac; stroke-dasharray: 1 1; shape-rendering: crispEdges; }
    .inner { fill: none; stroke: #a0a0a0; stroke-dasharray: 12 5; shape-rendering: crispEdges; }
    .edge { fill: none; stroke: #00ff00; shape-rendering: crispEdges; }
    .val { font: 9px "Liberation Sans", sans-serif; fill: #000080; text-anchor: middle; }
    .neg { fill: #800080; }
  `;

  render() {
    return html`
      <header>
        <span class="mark">${icon("bridge", 16)}</span>
        <h2>${this.heading}</h2>
        <span class="keys">
          <button aria-label="Minimalizovat"><svg width="14" height="12"><rect x="2" y="5" width="10" height="4" rx="1" fill="#fff" stroke="#46505e"/></svg></button>
          <button aria-label="Maximalizovat"><svg width="14" height="12"><path d="M3 2h9v8H3zM6 5h3v2H6z" fill="#fff" stroke="#46505e" fill-rule="evenodd"/></svg></button>
          <button class="close" aria-label="Zavřít"><svg width="14" height="12"><path d="M3 2l8 8M11 2l-8 8" stroke="#46505e" stroke-width="4"/><path d="M3 2l8 8M11 2l-8 8" stroke="#fff" stroke-width="2"/></svg></button>
        </span>
      </header>
      <div class="view">
        <svg>${this.drawing}</svg>
        <div class="notes">${this.captions.map(c => html`<div>${c}</div>`)}</div>
      </div>`;
  }
}

/* ---------- floating result panel ---------- */
@customElement("result-panel")
class ResultPanel extends LitElement {
  static styles = css`
    :host { display: flex; flex-direction: column; box-sizing: border-box; width: 166px; min-height: 519px; padding: 3px 4px 4px 3px; background: #e9edf5; border: 1px solid #f4f6fa; border-right: 2px solid #85878c; border-bottom: 2px solid #85878c; font: 11px/17px "Open Sans", sans-serif; color: #1c1c1c; }
    header { display: flex; justify-content: space-between; align-items: center; height: 23px; padding: 0 2px; background: #b7bec9; font-weight: 600; color: #44484f; }
    button { display: grid; place-items: center; padding: 0; border: 0; background: none; }
    .body { flex: 1; display: flex; flex-direction: column; padding: 4px 5px 6px; background: #f0f0f0; border-left: 1px solid #a9b0bb; border-bottom: 1px solid #555; }
    .unit { padding-left: 3px; }
    sup { font-size: 8px; line-height: 8px; }
    .scale { display: flex; height: 215px; margin-top: 1px; padding: 10px 0 10px 37px; box-sizing: border-box; border: 1px solid #8e8e8e; border-right-color: #fff; border-bottom-color: #fff; background: #faf7f0; }
    .swatch { width: 26px; border: 1px solid #000; background: #0000a0; }
    .ends { flex: 1; display: flex; flex-direction: column; justify-content: space-between; }
    .ends span { display: flex; align-items: center; gap: 3px; height: 1px; line-height: 1px; color: #000; }
    .ends span::before { content: ""; width: 6px; height: 1px; background: #000; }
    dl { display: grid; grid-template-columns: auto auto; justify-content: center; column-gap: 15px; margin: 9px 0 0; padding: 0 0 0 4px; border: 1px solid #dfe4ee; border-right-color: #a8a8ec; border-bottom-color: #a8a8ec; background: #f1f4f9; color: #000; }
    dt, dd { margin: 0; }
    .find { width: 25px; height: 21px; margin: auto 0 0 auto; border: 1px solid #adadad; background: #ececec; }
    footer { display: flex; gap: 6px; height: 22px; padding: 0 2px; background: #d0d5de; color: #222; }
    footer button { width: 24px; height: 21px; }
    footer .on { border-radius: 3px; background: #f6f8fa; box-shadow: inset 0 0 0 1px #c4dde4; }
  `;
  render() {
    return html`
      <header>Panel<button aria-label="Zavřít"><svg width="9" height="9"><path d="M1 1l7 7M8 1L1 8" stroke="#666" /></svg></button></header>
      <div class="body">
        <div>Rozložení zatížení</div>
        <div class="unit">[kN/m<sup>2</sup> ]</div>
        <div class="scale"><div class="swatch"></div><div class="ends"><span>10.000</span><span>10.000</span></div></div>
        <dl><dt>Max:</dt><dd>10.000</dd><dt>Min:</dt><dd>10.000</dd></dl>
        <button class="find" aria-label="Najít">${icon("find", 18)}</button>
      </div>
      <footer><button class="on" aria-label="Barvy">${icon("legend", 17)}</button><button aria-label="Faktory">${icon("scales", 17)}</button><button aria-label="Filtr">${icon("micro", 15)}</button></footer>`;
  }
}

@customElement("app-root")
class AppRoot extends LitElement {
  static styles = css`
    :host { display: flex; flex-direction: column; box-sizing: border-box; min-height: 100vh; padding: 0 7px 7px; border: 1px solid #6296c6; background: #8cc6fb; font: 11px/16px "Open Sans", sans-serif; color: #1c1c1c; }
    button { font: inherit; color: inherit; padding: 0; border: 0; background: none; }
    svg { display: block; }
    .title { display: grid; grid-template-columns: 135px 1fr 135px; height: 30px; }
    .title h1 { margin: 0; font: 15px/29px "Open Sans", sans-serif; text-align: center; color: #1d2a38; }
    .logo { padding: 5px 0 0 1px; }
    .sys { display: flex; justify-content: flex-end; align-items: flex-start; margin-right: -1px; }
    .sys button { width: 27px; height: 20px; display: grid; place-items: center; }
    .sys .x { width: 45px; background: #c75050; }
    .shell { flex: 1; display: flex; flex-direction: column; border-top: 1px solid #76a9da; background: #d0d4dc; }
    .menu { display: flex; align-items: center; gap: 15px; height: 23px; padding: 0 0 2px 2px; box-sizing: border-box; color: #4c5058; }
    .menu button { white-space: nowrap; }
    .grip { flex: none; width: 10px; height: 14px; background: radial-gradient(circle at 5px 1px, #fff 1px, transparent 2px) 0 0 / 10px 4px, radial-gradient(circle at 4px 2px, #a5abb8 1px, transparent 2px) 0 0 / 10px 4px; }
    .menu .grip { margin-right: -10px; }
    .bar { display: flex; gap: 2px; height: 25px; margin-bottom: 1px; }
    .strip { display: flex; align-items: center; border-radius: 3px; background: linear-gradient(#eceef4, #dfe2ea 50%, #cdd2db); box-shadow: 0 1px #a6abb6; }
    .strip:last-child { flex: 1; overflow: hidden; min-width: 0; }
    .tool { flex: none; display: flex; align-items: center; justify-content: center; width: 22px; height: 22px; }
    .tool.drop { width: 35px; justify-content: space-between; padding-left: 1px; box-sizing: border-box; }
    .tool.drop::after { content: ""; margin-right: 4px; border: 3px solid transparent; border-top: 4px solid #7d828c; border-bottom: 0; }
    .tool.on { box-sizing: border-box; border: 1px solid #a99a78; border-radius: 2px; background: linear-gradient(#fdd9a4, #fbbd62 50%, #fde3a6); }
    .sep { flex: none; width: 8px; height: 14px; background: linear-gradient(90deg, transparent 3px, #a6abb8 3px 4px, #fff 4px 5px, transparent 5px); }
    .combo { position: relative; flex: none; width: 216px; margin: 0 2px; }
    .combo select { width: 100%; height: 18px; padding: 0 3px; appearance: none; border: 0; border-radius: 0; background: #fff; font: inherit; font-size: 11px; color: #000; display: block; }
    .combo::after { content: ""; position: absolute; right: 1px; top: 1px; width: 13px; height: 16px; background: #e3e6ec; }
    .combo svg { position: absolute; z-index: 1; right: 5px; top: 7px; }
    .main { flex: 1; display: flex; gap: 5px; position: relative; }
    .nav { width: 294px; flex: none; display: flex; flex-direction: column; }
    .nav header { display: flex; align-items: center; gap: 9px; height: 20px; padding: 0 4px; background: #b8bfca; border-bottom: 1px solid #a7aeba; box-sizing: border-box; color: #43474e; }
    .nav header span { flex: 1; }
    .tree { flex: 1; padding: 1px 2px 1px 3px; border: solid #e8eef7; border-width: 2px 2px 0; border-bottom: 1px solid #777; background: #fbfbf3; color: #000; }
    .tabs { display: flex; gap: 10px; height: 23px; padding: 0 4px; color: #3f444c; }
    .tabs button { display: flex; align-items: center; gap: 2px; height: 21px; padding: 0 0 0 1px; color: #3f444c; }
    .tabs .on { margin-left: -3px; padding: 0 4px 0 2px; border-radius: 0 0 4px 4px; background: linear-gradient(#eef1f5, #fafbfc); box-shadow: inset 0 0 0 1px #c3dce2; }
    .tabs .blue { color: #2c50b0; display: flex; }
    .mdi { flex: 1; display: flex; flex-direction: column; min-width: 0; padding: 1px 4px 3px 3px; border-top: 1px solid #8c9099; background: #d0d4dc; }
    result-panel { position: absolute; z-index: 2; right: 27px; top: 322px; }
    .status { display: flex; align-items: center; height: 21px; box-sizing: border-box; border-top: 1px solid #9fa4ae; background: linear-gradient(#d6dae0, #bcc0c8 40%, #a4a9b2 60%, #b9bdc5); color: #222; }
    .status .msg { flex: 1; padding-left: 4px; }
    .modes { display: flex; gap: 2px; padding-right: 4px; }
    .modes button { height: 18px; padding: 0 4px 0 2px; border: 1px solid; border-color: #111 #fff #fff #111; color: #2c2c2c; }
    .modes button.off { border-color: #eee #999 #999 #eee; padding-bottom: 2px; }
    .cell { align-self: stretch; margin: 2px 0; border-left: 1px solid #9499a2; box-sizing: border-box; }
    .c1 { width: 151px; } .c2 { width: 88px; } .c3 { width: 74px; } .c4 { width: 90px; display: flex; justify-content: flex-end; align-items: flex-end; }
  `;

  private tool(spec: string) {
    if (spec === "|") return html`<span class="sep"></span>`;
    if (spec === "combo")
      return html`<label class="combo"><select aria-label="Zatěžovací stav"><option>ZS1</option></select><svg width="7" height="4"><path d="M0 0h7L3.500 4z" fill="#777"/></svg></label>`;
    const on = spec.startsWith("*");
    const drop = spec.endsWith(":v");
    const name = spec.replace("*", "").replace(":v", "");
    return html`<button class=${classMap({ tool: true, on, drop })} aria-label=${name}>${icon(name, 20)}</button>`;
  }

  render() {
    return html`
      <div class="title">
        <div class="logo"><svg width="18" height="18" viewBox="0 0 18 18"><path d="M3 7l6-5 7 2v6l-5 6-8-3z" fill="#7c8cae" stroke="#3c4a6c"/><path d="M6 5l6 3v7M9 3l6 3v6M4 8l8 2 4-5" fill="none" stroke="#2d3a5c"/><text x="0" y="15" font-family="Open Sans, sans-serif" font-size="12" font-weight="800" fill="#ffd400" stroke="#5a4600" stroke-width=".6">5</text></svg></div>
        <h1>RFEM 5.04.0058 (64bit) - Rozložení zatížení</h1>
        <div class="sys">
          <button aria-label="Minimalizovat"><svg width="12" height="12"><path d="M2 8h8v2H2z" fill="#111"/></svg></button>
          <button aria-label="Maximalizovat"><svg width="12" height="12"><path d="M1 2h10v8H1z" fill="none" stroke="#111"/><path d="M1 2h10" stroke="#111" stroke-width="2"/></svg></button>
          <button class="x" aria-label="Zavřít"><svg width="10" height="10"><path d="M1 2l7 7M8 2L1 9" stroke="#fff" stroke-width="2"/></svg></button>
        </div>
      </div>
      <div class="shell">
        <nav class="menu"><span class="grip"></span>${menus.map(m => {
          const i = m.indexOf("_");
          return html`<button>${m.slice(0, i)}<u>${m[i + 1]}</u>${m.slice(i + 2)}</button>`;
        })}</nav>
        ${bars.map(b => html`<div class="bar">${b.map(s => html`<div class="strip" role="toolbar"><span class="grip"></span>${s.map(t => this.tool(t))}</div>`)}</div>`)}
        <div class="main">
          <aside class="nav">
            <header><span>Navigátor projektu - Výsledky</span>
              <button aria-label="Připnout"><svg width="9" height="9"><path d="M3 1h4v4H3zM1 5h7M4 5v4" fill="none" stroke="#555"/></svg></button>
              <button aria-label="Zavřít"><svg width="9" height="9"><path d="M1 1l7 7M8 1L1 8" stroke="#555"/></svg></button>
            </header>
            <div class="tree"><nav-tree></nav-tree></div>
            <div class="tabs">
              <button>${icon("tabData", 17)}Data</button>
              <button>${icon("tabShow", 17)}Zobrazit</button>
              <button><span class="blue">${icon("micro", 15)}</span>Pohledy</button>
              <button class="on">${icon("surfRes", 16)}Výsledky</button>
            </div>
          </aside>
          <div class="mdi">
            <model-window heading="Rozložení zatížení, ZS1" .captions=${["ZS1", "Zatížení [kN/m^2], [kN]"]} .drawing=${viewLoads()}></model-window>
            <model-window active heading="Rozložení zatížení" .captions=${["Rozložení zatížení [kN],[kN/m^2]", "ZS1"]} .drawing=${viewMesh()}></model-window>
          </div>
          <result-panel></result-panel>
        </div>
        <div class="status">
          <span class="msg">Hotovo</span>
          <span class="modes">${["UCHOP", "RASTR", "KARTEZ", "OUCHOP", "VLINIE", "DXF"].map(m => html`<button class=${m === "RASTR" ? "off" : ""}>${m}</button>`)}</span>
          <span class="cell c1"></span><span class="cell c2"></span><span class="cell c3"></span><span class="cell c3"></span>
          <span class="cell c4"><svg width="12" height="12"><path d="M9 1h2v2H9zM5 5h2v2H5zM9 5h2v2H9zM1 9h2v2H1zM5 9h2v2H5zM9 9h2v2H9z" fill="#6c7079"/></svg></span>
        </div>
      </div>`;
  }
}
